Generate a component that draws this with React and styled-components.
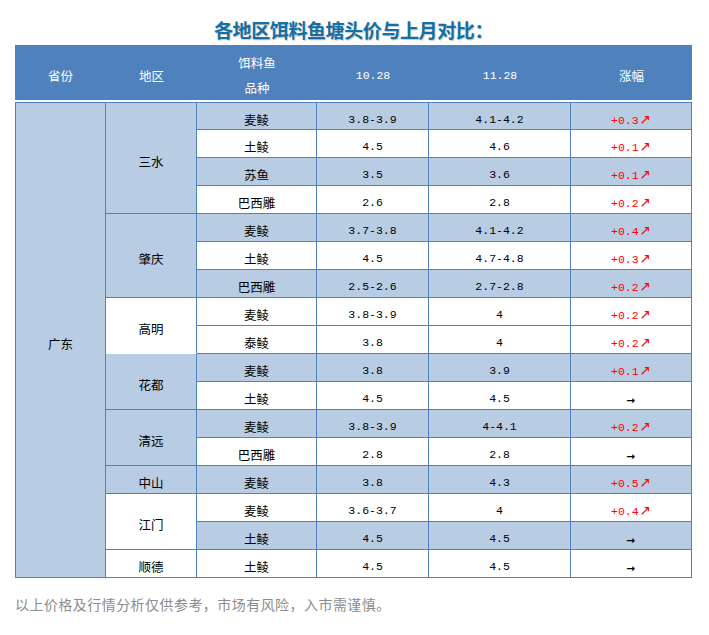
import React from 'react';
import styled, { createGlobalStyle } from 'styled-components';

const Global = createGlobalStyle`
  html, body { margin: 0; padding: 0; background: #fff; }
  body { font-family: "Noto Sans CJK SC", "Noto Sans", sans-serif; }
`;

const Page = styled.div`
  width: 709px;
  padding: 0 17px 0 15px;
  box-sizing: border-box;
`;

const Title = styled.h2`
  margin: 0;
  height: 45px;
  box-sizing: border-box;
  padding-top: 18px;
  line-height: 24px;
  text-align: center;
  font-family: "Noto Sans CJK SC", sans-serif;
  font-size: 19px;
  letter-spacing: -0.4px;
  font-weight: 700;
  color: #136fa6;
  text-shadow: 1px 1px 1px rgba(0, 0, 0, 0.22);
`;

const Table = styled.table`
  width: 677px;
  table-layout: fixed;
  border-collapse: separate;
  border-spacing: 0;
  font-size: 12.5px;
  color: #000;
`;

const HeadCell = styled.th`
  height: 57px;
  box-sizing: border-box;
  padding: 5px 0 0;
  background: #4f81bd;
  border-bottom: 2px solid #fff;
  color: #fff;
  font-weight: 400;
  font-size: 12.5px;
  line-height: 25px;
  text-align: center;
  vertical-align: middle;
  font-family: ${(p) => (p.$mono ? '"Liberation Mono", monospace' : '"Noto Sans CJK SC", sans-serif')};
  ${(p) => p.$mono && 'font-size: 11.5px;'}
`;

const Cell = styled.td`
  height: 28px;
  box-sizing: border-box;
  padding: 7px 0 0;
  line-height: 16px;
  text-align: center;
  vertical-align: middle;
  background: ${(p) => (p.$shade ? '#b8cce4' : '#fff')};
  border-right: 1px solid #4f81bd;
  border-bottom: ${(p) => (p.$noBottom ? '1px solid transparent' : '1px solid #4f81bd')};
  ${(p) => p.$first && 'border-left: 1px solid #4f81bd;'}
  ${(p) => p.$top && 'border-top: 1px solid #4f81bd;'}
  font-family: ${(p) => (p.$mono ? '"Liberation Mono", monospace' : '"Noto Sans CJK SC", sans-serif')};
  ${(p) => p.$mono && 'font-size: 11.5px;'}
  white-space: nowrap;
`;

const Up = styled.span`
  color: #ff0000;
  font-family: "Liberation Mono", monospace;
  font-size: 11.5px;
`;

const Arrow = styled.span`
  font-family: "DejaVu Sans", sans-serif;
  font-size: 13.5px;
  margin-left: 1px;
`;

const Flat = styled.span`
  font-family: "DejaVu Sans", sans-serif;
  font-size: 10.5px;
  font-weight: 700;
  color: #000;
`;

const Footer = styled.p`
  margin: 16px 0 0;
  line-height: 20px;
  font-size: 14px;
  letter-spacing: 0.45px;
  color: #8c8c8c;
  font-family: "Noto Sans CJK SC", sans-serif;
`;

const regions = [
  { name: '三水', shade: true, items: [
    ['麦鲮', '3.8-3.9', '4.1-4.2', '+0.3', true],
    ['土鲮', '4.5', '4.6', '+0.1', false],
    ['苏鱼', '3.5', '3.6', '+0.1', true],
    ['巴西雕', '2.6', '2.8', '+0.2', false],
  ] },
  { name: '肇庆', shade: true, items: [
    ['麦鲮', '3.7-3.8', '4.1-4.2', '+0.4', true],
    ['土鲮', '4.5', '4.7-4.8', '+0.3', false],
    ['巴西雕', '2.5-2.6', '2.7-2.8', '+0.2', true],
  ] },
  { name: '高明', shade: false, noBottom: true, items: [
    ['麦鲮', '3.8-3.9', '4', '+0.2', false],
    ['泰鲮', '3.8', '4', '+0.2', false],
  ] },
  { name: '花都', shade: true, items: [
    ['麦鲮', '3.8', '3.9', '+0.1', true],
    ['土鲮', '4.5', '4.5', null, false],
  ] },
  { name: '清远', shade: true, items: [
    ['麦鲮', '3.8-3.9', '4-4.1', '+0.2', true],
    ['巴西雕', '2.8', '2.8', null, false],
  ] },
  { name: '中山', shade: true, items: [
    ['麦鲮', '3.8', '4.3', '+0.5', true],
  ] },
  { name: '江门', shade: false, items: [
    ['麦鲮', '3.6-3.7', '4', '+0.4', false],
    ['土鲮', '4.5', '4.5', null, true],
  ] },
  { name: '顺德', shade: false, items: [
    ['土鲮', '4.5', '4.5', null, false],
  ] },
];

const totalRows = regions.reduce((n, r) => n + r.items.length, 0);

function Change({ value }) {
  if (!value) return <Flat>→</Flat>;
  return (
    <Up>
      {value}
      <Arrow>↗</Arrow>
    </Up>
  );
}

export default function App() {
  let rowIndex = 0;
  return (
    <Page>
      <Global />
      <Title>各地区饵料鱼塘头价与上月对比：</Title>
      <Table>
        <colgroup>
          <col style={{ width: 91 }} />
          <col style={{ width: 91 }} />
          <col style={{ width: 120 }} />
          <col style={{ width: 112 }} />
          <col style={{ width: 142 }} />
          <col style={{ width: 121 }} />
        </colgroup>
        <thead>
          <tr>
            <HeadCell>省份</HeadCell>
            <HeadCell>地区</HeadCell>
            <HeadCell>饵料鱼<br />品种</HeadCell>
            <HeadCell $mono>10.28</HeadCell>
            <HeadCell $mono>11.28</HeadCell>
            <HeadCell>涨幅</HeadCell>
          </tr>
        </thead>
        <tbody>
          {regions.map((region) =>
            region.items.map((item, i) => {
              const top = rowIndex === 0;
              const first = rowIndex === 0;
              rowIndex += 1;
              const [kind, a, b, chg, shade] = item;
              return (
                <tr key={region.name + i}>
                  {first && (
                    <Cell rowSpan={totalRows} $shade $first $top>广东</Cell>
                  )}
                  {i === 0 && (
                    <Cell rowSpan={region.items.length} $shade={region.shade} $top={top} $noBottom={region.noBottom}>
                      {region.name}
                    </Cell>
                  )}
                  <Cell $shade={shade} $top={top}>{kind}</Cell>
                  <Cell $shade={shade} $top={top} $mono>{a}</Cell>
                  <Cell $shade={shade} $top={top} $mono>{b}</Cell>
                  <Cell $shade={shade} $top={top}><Change value={chg} /></Cell>
                </tr>
              );
            })
          )}
        </tbody>
      </Table>
      <Footer>以上价格及行情分析仅供参考，市场有风险，入市需谨慎。</Footer>
    </Page>
  );
}
